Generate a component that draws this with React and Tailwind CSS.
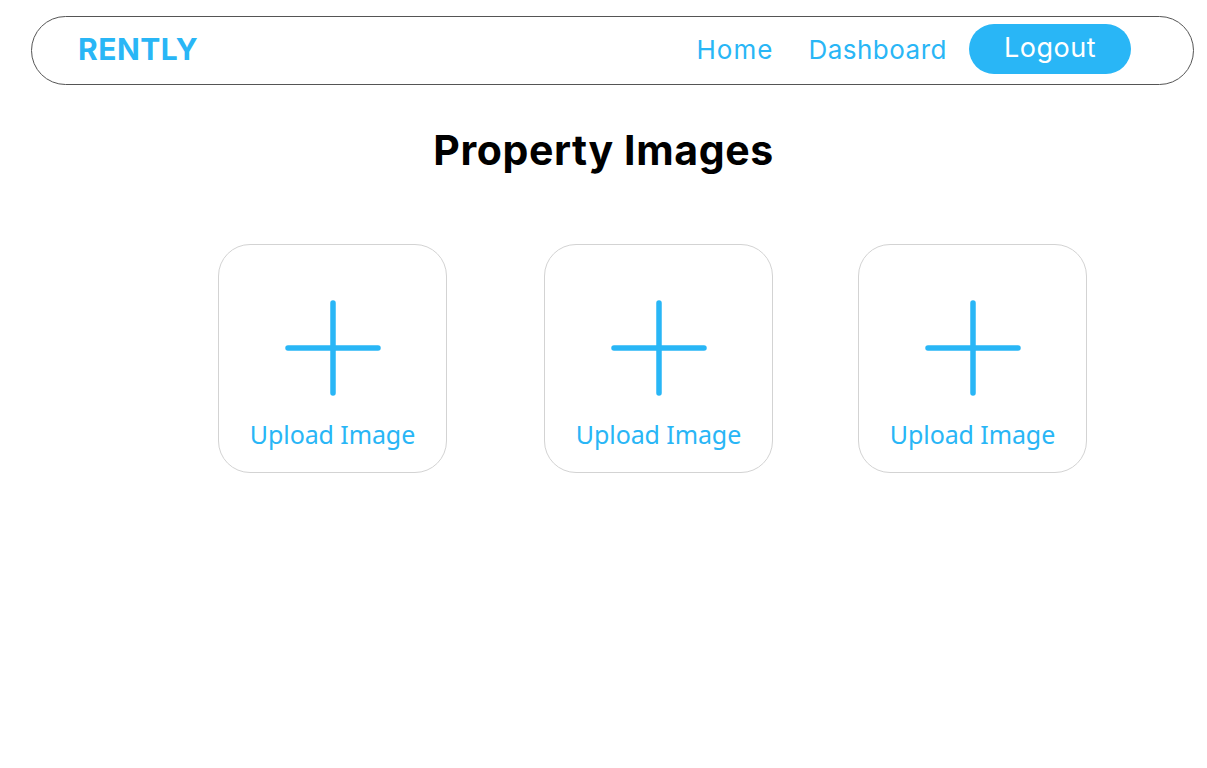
import React from "react";

const PlusIcon = () => (
  <svg width="96" height="96" viewBox="0 0 96 96" fill="none">
    <path d="M48 3v90M3 48h90" stroke="#29B6F6" strokeWidth="5.5" strokeLinecap="round" />
  </svg>
);

const UploadCard = ({ className = "" }) => (
  <div
    className={`w-[229px] h-[229px] rounded-[32px] border border-[#d3d3d3] flex flex-col items-center bg-white ${className}`}
  >
    <div className="mt-[55px]">
      <PlusIcon />
    </div>
    <span className="mt-[26px] text-[25px] text-[#29B6F6] font-['Noto_Sans',sans-serif] leading-none tracking-[-0.1px]">
      Upload Image
    </span>
  </div>
);

export default function App() {
  return (
    <div className="min-h-screen bg-white font-['Inter',sans-serif]">
      {/* Navbar */}
      <nav className="ml-[31px] mt-[16px] w-[1163px] h-[69px] rounded-full border border-[#555] flex items-center justify-between pl-[46px] pr-[62px] pb-[3px]">
        <span className="text-[30px] font-bold text-[#29B6F6] tracking-[0.5px]">RENTLY</span>
        <div className="flex items-center">
          <a className="text-[26px] text-[#29B6F6] tracking-[1px]">Home</a>
          <a className="ml-[35px] text-[26px] text-[#29B6F6] tracking-[0.5px]">Dashboard</a>
          <button className="ml-[22px] w-[162px] h-[50px] rounded-full bg-[#29B6F6] text-white text-[27px] tracking-[0.5px] flex items-center justify-center pb-[2px]">
            Logout
          </button>
        </div>
      </nav>

      <h1 className="mt-[38px] text-center text-[41px] font-bold text-black tracking-[0.6px] leading-[54px]">
        Property Images
      </h1>

      <div className="mt-[67px] flex pl-[218px]">
        <UploadCard />
        <UploadCard className="ml-[97px]" />
        <UploadCard className="ml-[85px]" />
      </div>
    </div>
  );
}
